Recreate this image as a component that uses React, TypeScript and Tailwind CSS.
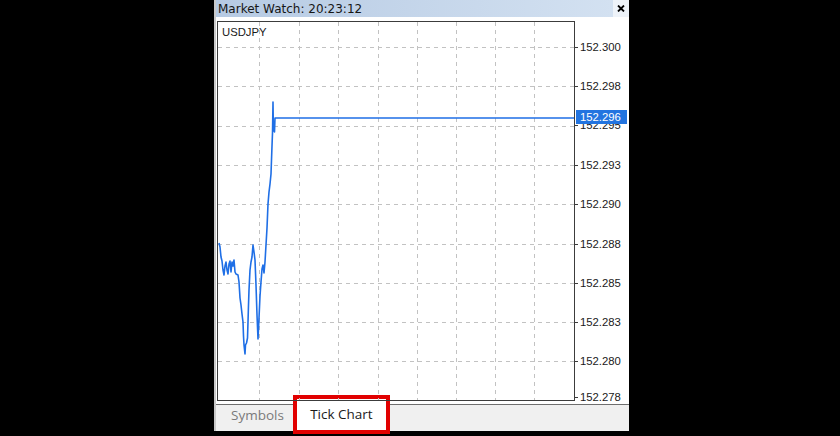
import React from 'react'

const hLines = [47, 86, 126, 165, 204, 244, 283, 322, 361]
const vLines = [259, 299, 338, 378, 417, 456, 495, 534]

const priceLabels = [
  { y: 47, text: '152.300' },
  { y: 86, text: '152.298' },
  { y: 125, text: '152.295' },
  { y: 165, text: '152.293' },
  { y: 204, text: '152.290' },
  { y: 244, text: '152.288' },
  { y: 283, text: '152.285' },
  { y: 322, text: '152.283' },
  { y: 361, text: '152.280' },
  { y: 397, text: '152.278' },
]

// tick history, in page pixels (svg viewBox matches the chart's inner box)
const ticks: [number, number][] = [
  [219, 243], [220, 247], [221, 257], [222, 261], [223, 270], [224, 275], [225, 266], [226, 262],
  [227, 270], [228, 274], [229, 264], [230, 261], [231, 272], [232, 262], [233, 266], [234, 260],
  [235, 272], [236, 274], [238, 275], [239, 282], [240, 298], [241, 305], [242, 314], [243, 322],
  [243.5, 336], [244, 345], [245, 354], [245.5, 345], [246.5, 343], [247.5, 338], [248, 322],
  [248.5, 305], [249, 290], [250, 270], [251, 262], [252, 257], [253, 245], [254, 252], [255, 260],
  [256, 285], [257, 315], [258, 339], [259, 318], [260, 296], [261, 282], [262, 269], [263, 265],
  [264, 273], [265, 262], [266, 245], [267, 228], [268, 204], [269, 192], [270, 184], [271, 174],
  [271.5, 160], [272, 146], [272.5, 133], [273, 102], [273.4, 131], [274, 125], [274.5, 132],
  [275, 118], [574, 118],
]

const tickPath = ticks.map(([x, y], i) => `${i === 0 ? 'M' : 'L'}${x} ${y}`).join(' ')

export default function App() {
  return (
    <div className="flex h-[436px] w-[840px] bg-black">
      <div className="ml-[214px] flex h-[431px] w-[415px] flex-col border-l-2 border-[#c9c9c9] bg-white">
        {/* title bar */}
        <div className="flex h-[17px] shrink-0">
          <div className="flex flex-1 items-center bg-linear-to-r from-[#b6cae3] to-[#d3e1f1] pl-[2px] font-['DejaVu_Sans',sans-serif] text-[12px] leading-none text-[#161616]">
            Market Watch: 20:23:12
          </div>
          <div className="flex w-[16px] items-center justify-center bg-[#eef3f9]">
            <svg width="8" height="7" viewBox="0 0 8 7">
              <path d="M1 0.5 L7 6.5 M7 0.5 L1 6.5" stroke="#000" strokeWidth="1.8" />
            </svg>
          </div>
        </div>

        {/* chart + price axis */}
        <div className="mt-[4px] flex shrink-0">
          <div className="relative ml-[1px] h-[380px] w-[358px] border border-[#3c3c3c]">
            <svg className="block" width={356} height={378} viewBox="218 22 356 378">
              <g stroke="#c2c2c2" strokeWidth="1" strokeDasharray="4 4" shapeRendering="crispEdges">
                {hLines.map((y) => (
                  <line key={`h${y}`} x1={218} x2={574} y1={y + 0.5} y2={y + 0.5} />
                ))}
                {vLines.map((x) => (
                  <line key={`v${x}`} x1={x + 0.5} x2={x + 0.5} y1={22} y2={400} />
                ))}
              </g>
              <path d={tickPath} fill="none" stroke="#1f6fe6" strokeWidth="1.6" strokeLinejoin="round" />
            </svg>
            <span className="absolute left-[4px] top-[4px] font-['Liberation_Sans',Arial,sans-serif] text-[11.3px] leading-[12px] text-[#1a1a1a]">
              USDJPY
            </span>
          </div>

          <div className="relative flex-1 font-['Liberation_Sans',Arial,sans-serif] text-[11.3px] leading-[12px] text-[#1a1a1a]">
            {priceLabels.map((l) => (
              <React.Fragment key={l.text}>
                <div className="absolute left-0 h-px w-[3px] bg-[#3c3c3c]" style={{ top: l.y - 21 }} />
                <span className="absolute left-[5px]" style={{ top: l.y - 27 }}>
                  {l.text}
                </span>
              </React.Fragment>
            ))}
            <div className="absolute left-[1px] top-[89px] h-[14px] w-[51px] bg-[#2274e0] pl-[4px] leading-[14px] text-white">
              152.296
            </div>
          </div>
        </div>

        <div className="h-[3px] shrink-0" />

        {/* tabs */}
        <div className="flex h-[27px] shrink-0 items-start border-t border-[#6e6e6e] bg-[#f0f0f0] pl-[15px] font-['Open_Sans',sans-serif] text-[13.5px]">
          <span className="leading-[20px] text-[#7a7a7a]">Symbols</span>
          <div className="-mt-[10px] ml-[9px] flex h-[39px] w-[97px] shrink-0 items-center justify-center border-[4px] border-[#e10000] bg-white leading-[31px] text-[#1a1a1a]">
            Tick Chart
          </div>
        </div>
      </div>
    </div>
  )
}
